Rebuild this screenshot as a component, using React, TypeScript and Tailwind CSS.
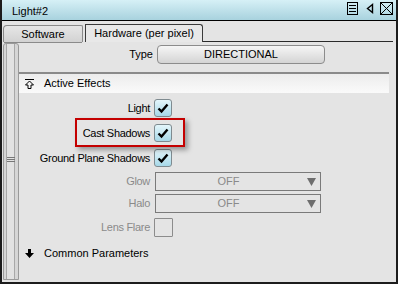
import React from 'react'

function Check() {
  return (
    <svg width="16" height="16" viewBox="0 0 16 16" className="block">
      <path d="M3.5 8.5 L6.5 11.5 L12.5 4.5" fill="none" stroke="#000" strokeWidth="2.4" strokeLinejoin="miter" />
    </svg>
  )
}

function CheckBox({ checked = true }: { checked?: boolean }) {
  if (!checked) {
    return <div className="w-[19px] h-[19px] border border-[#8c8c8c] rounded-[1px]" />
  }
  return (
    <div className="w-[18px] h-[18px] rounded-[3px] border border-[#7f8b90] bg-gradient-to-b from-[#e4f6fb] to-[#a6d8e8] flex items-center justify-center">
      <Check />
    </div>
  )
}

function Dropdown() {
  return (
    <div className="w-[166px] h-[19px] border border-[#7a7a7a] flex items-center">
      <span className="flex-1 text-center text-[#8a8a8a] pl-[2px]">OFF</span>
      <svg width="9" height="8" viewBox="0 0 9 8" className="mr-[4px] ml-[8px]">
        <path d="M0 0 H9 L4.5 8 Z" fill="#6e6e6e" />
      </svg>
    </div>
  )
}

function Row({ label, disabled = false, children }: { label: string; disabled?: boolean; children: React.ReactNode }) {
  return (
    <div className="flex items-center">
      <div className={`w-[135px] text-right pr-[4px] tracking-[-0.3px] ${disabled ? 'text-[#8a8a8a]' : 'text-black'}`}>{label}</div>
      {children}
    </div>
  )
}

export default function App() {
  return (
    <div className="relative w-[398px] h-[284px] bg-[#e4e4e4] border-x-2 border-b-2 border-[#1c1c1c] flex flex-col font-['Liberation_Sans',sans-serif] text-[11px] leading-[13px] text-black overflow-hidden">
      {/* Title bar */}
      <div className="h-[21px] shrink-0 border-b border-black bg-gradient-to-b from-[#d6f0f6] to-[#a8d2de] flex items-center pl-[10px] pr-[2px]">
        <span className="flex-1 pt-[3px]">Light#2</span>
        <svg width="48" height="16" viewBox="0 0 48 16" className="mt-[-2px]">
          <rect x="1.5" y="1.5" width="10" height="12" fill="none" stroke="#000" />
          <line x1="3" y1="4.5" x2="10" y2="4.5" stroke="#000" />
          <line x1="3" y1="7.5" x2="10" y2="7.5" stroke="#000" />
          <line x1="3" y1="10.5" x2="10" y2="10.5" stroke="#000" />
          <path d="M26.5 3.5 L21.5 7.5 L26.5 11.5 Z" fill="none" stroke="#000" strokeWidth="1.4" />
          <rect x="34.5" y="1.5" width="12" height="12" fill="none" stroke="#000" />
          <line x1="34.5" y1="1.5" x2="46.5" y2="13.5" stroke="#000" />
          <line x1="46.5" y1="1.5" x2="34.5" y2="13.5" stroke="#000" />
        </svg>
      </div>

      {/* Tabs */}
      <div className="h-[21px] shrink-0 flex items-end pl-[1px] pr-[3px] pt-[3px]">
        <div className="w-[80px] h-[17px] border border-b-0 border-[#8a8a8a] rounded-tl-[4px] rounded-tr-[2px] bg-gradient-to-b from-[#e6e6e6] to-[#d2d2d2] flex items-center justify-center relative">
          <span>Software</span>
          <div className="absolute left-0 right-0 bottom-[-1px] h-px bg-[#8a8a8a]" />
        </div>
        <div className="ml-[2px] w-[118px] h-[18px] border border-b-0 border-[#3a3a3a] rounded-tr-[3px] bg-[#e8e8e8] flex items-center justify-center">
          <span>Hardware (per pixel)</span>
        </div>
        <div className="flex-1 h-px bg-[#2a2a2a]" />
      </div>

      {/* Body */}
      <div className="flex-1 flex pl-[1px] pr-[3px] pb-[2px]">
        {/* Left scroll strip */}
        <div className="w-[16px] mt-[1px] border border-[#9a9a9a] rounded-t-[3px] bg-[#d6d6d6] flex">
          <div className="ml-[2px] w-[9px] border-x border-[#a8a8a8] bg-[#e2e2e2] flex flex-col items-center justify-center pb-[4px]">
            <div className="w-[8px] flex flex-col gap-[1px]">
              <div className="h-px bg-[#777]" />
              <div className="h-px bg-[#777]" />
              <div className="h-px bg-[#777]" />
            </div>
          </div>
        </div>

        {/* Content */}
        <div className="flex-1 flex flex-col pr-[4px]">
          <div className="mt-[3px] flex items-center">
            <div className="w-[138px] text-right pr-[4px]">Type</div>
            <div className="w-[168px] h-[19px] rounded-[4px] border border-[#8c8c8c] bg-gradient-to-b from-[#f6f6f6] to-[#d4d4d4] flex items-center justify-center">
              DIRECTIONAL
            </div>
          </div>

          <div className="mt-[8px] h-[21px] border-t-2 border-[#8a8a8a] bg-gradient-to-b from-[#ececec] to-[#fafafa] flex items-center pl-[6px]">
            <svg width="9" height="10" viewBox="0 0 9 10" className="mr-[10px]">
              <line x1="0" y1="0.5" x2="9" y2="0.5" stroke="#000" />
              <path d="M4.5 2 L8.5 6 L6 6 L6 9.5 L3 9.5 L3 6 L0.5 6 Z" fill="none" stroke="#000" />
            </svg>
            <span>Active Effects</span>
          </div>

          <div className="mt-[6px] flex flex-col">
            <Row label="Light"><CheckBox /></Row>
            <div className="mt-[7px]"><Row label="Cast Shadows"><CheckBox /></Row></div>
            <div className="mt-[7px]"><Row label="Ground Plane Shadows"><CheckBox /></Row></div>
            <div className="mt-[5px]"><Row label="Glow" disabled><div className="ml-[1px]"><Dropdown /></div></Row></div>
            <div className="mt-[3px]"><Row label="Halo" disabled><div className="ml-[1px]"><Dropdown /></div></Row></div>
            <div className="mt-[5px]"><Row label="Lens Flare" disabled><CheckBox checked={false} /></Row></div>
          </div>

          <div className="mt-[10px] flex items-center pl-[6px]">
            <svg width="9" height="9" viewBox="0 0 9 9" className="mr-[10px]">
              <path d="M3 0 H6 V4 H9 L4.5 9 L0 4 H3 Z" fill="#000" />
            </svg>
            <span>Common Parameters</span>
          </div>
        </div>
      </div>

      {/* Highlight annotation */}
      <div className="absolute left-[73px] top-[118px] w-[110px] h-[29px] border-2 border-[#c40000] shadow-[3px_3px_5px_rgba(0,0,0,0.35)] pointer-events-none" />
    </div>
  )
}
